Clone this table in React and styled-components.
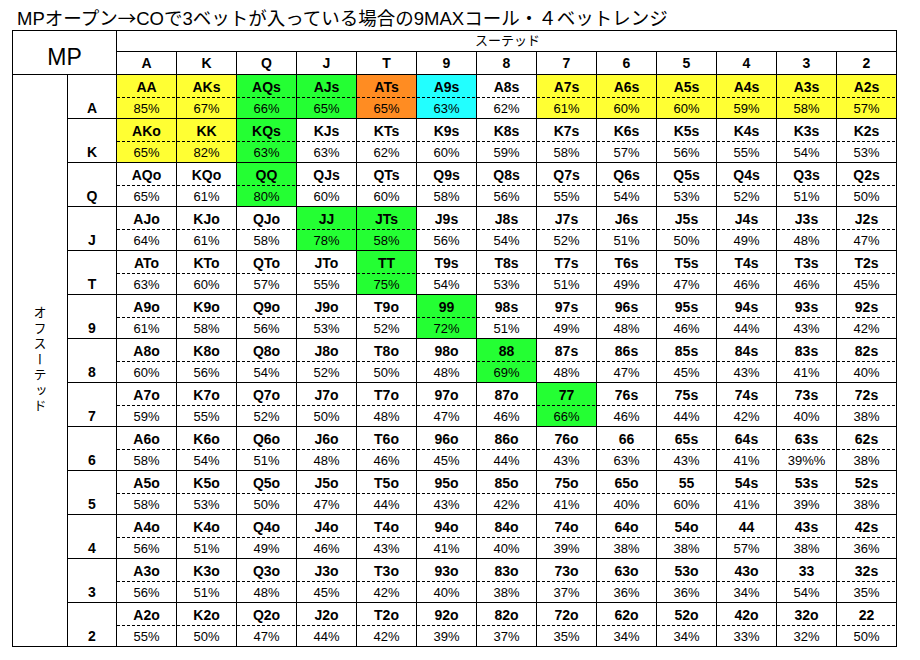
import styled, { createGlobalStyle } from "styled-components";

const RANKS = ["A", "K", "Q", "J", "T", "9", "8", "7", "6", "5", "4", "3", "2"];

const PCTS = [
  ["85", "67", "66", "65", "65", "63", "62", "61", "60", "60", "59", "58", "57"],
  ["65", "82", "63", "63", "62", "60", "59", "58", "57", "56", "55", "54", "53"],
  ["65", "61", "80", "60", "60", "58", "56", "55", "54", "53", "52", "51", "50"],
  ["64", "61", "58", "78", "58", "56", "54", "52", "51", "50", "49", "48", "47"],
  ["63", "60", "57", "55", "75", "54", "53", "51", "49", "47", "46", "46", "45"],
  ["61", "58", "56", "53", "52", "72", "51", "49", "48", "46", "44", "43", "42"],
  ["60", "56", "54", "52", "50", "48", "69", "48", "47", "45", "43", "41", "40"],
  ["59", "55", "52", "50", "48", "47", "46", "66", "46", "44", "42", "40", "38"],
  ["58", "54", "51", "48", "46", "45", "44", "43", "63", "43", "41", "39%", "38"],
  ["58", "53", "50", "47", "44", "43", "42", "41", "40", "60", "41", "39", "38"],
  ["56", "51", "49", "46", "43", "41", "40", "39", "38", "38", "57", "38", "36"],
  ["56", "51", "48", "45", "42", "40", "38", "37", "36", "36", "34", "54", "35"],
  ["55", "50", "47", "44", "42", "39", "37", "35", "34", "34", "33", "32", "50"],
];

const YELLOW = "#ffff33";
const GREEN = "#24ff33";
const ORANGE = "#ff8c22";
const CYAN = "#22ffff";

const COLORS = {
  AA: YELLOW, AKs: YELLOW, AKo: YELLOW, KK: YELLOW,
  A7s: YELLOW, A6s: YELLOW, A5s: YELLOW, A4s: YELLOW, A3s: YELLOW, A2s: YELLOW,
  AQs: GREEN, AJs: GREEN, KQs: GREEN, QQ: GREEN, JJ: GREEN, JTs: GREEN,
  TT: GREEN, "99": GREEN, "88": GREEN, "77": GREEN,
  ATs: ORANGE,
  A9s: CYAN,
};

function handName(i, j) {
  if (i === j) return RANKS[i] + RANKS[j];
  if (i < j) return RANKS[i] + RANKS[j] + "s";
  return RANKS[j] + RANKS[i] + "o";
}

const GlobalStyle = createGlobalStyle`
  body {
    margin: 0;
    background: #fff;
    color: #000;
    font-family: "Liberation Sans", "Noto Sans CJK JP", sans-serif;
  }
`;

const Page = styled.div`
  width: 920px;
  height: 660px;
  overflow: hidden;
`;

const Title = styled.h1`
  margin: 0;
  height: 30px;
  box-sizing: border-box;
  padding: 6px 0 0 17px;
  font-size: 18.5px;
  line-height: 22px;
  font-weight: normal;
  white-space: nowrap;
`;

const Arrow = styled.span`
  font-family: "Noto Sans CJK JP", sans-serif;
`;

const Table = styled.div`
  display: grid;
  grid-template-columns: 55px 49px repeat(13, 60px);
  grid-template-rows: 21px 23px repeat(13, 44px);
  width: max-content;
  margin-left: 12px;
  border-left: 1px solid #000;
  border-top: 1px solid #000;
`;

const Cell = styled.div`
  box-sizing: border-box;
  border-right: 1px solid #000;
  border-bottom: 1px solid #000;
`;

const Corner = styled(Cell)`
  grid-column: span 2;
  grid-row: span 2;
  display: flex;
  align-items: center;
  justify-content: center;
  padding-top: 9px;
  font-size: 23px;
`;

const SuitedHead = styled(Cell)`
  grid-column: span 13;
  padding-left: 358px;
  font-size: 13px;
  line-height: 20px;
`;

const RankHead = styled(Cell)`
  display: flex;
  align-items: center;
  justify-content: center;
  font-size: 14px;
  font-weight: bold;
`;

const OffsuitLabel = styled(Cell)`
  grid-row: span 13;
  display: flex;
  align-items: center;
  justify-content: center;
  span {
    writing-mode: vertical-rl;
    font-family: "Noto Sans CJK JP", sans-serif;
    font-size: 13px;
    letter-spacing: 2.5px;
    line-height: 1;
  }
`;

const RowLabel = styled(Cell)`
  display: flex;
  align-items: center;
  justify-content: center;
  padding-top: 22px;
  font-size: 14px;
  font-weight: bold;
`;

const Hand = styled(Cell)`
  display: grid;
  grid-template-rows: 22px 1px 1fr;
  background: ${({ $bg }) => $bg || "#fff"};
`;

const HandName = styled.div`
  display: flex;
  align-items: center;
  justify-content: center;
  padding-top: 1px;
  font-size: 14px;
  font-weight: bold;
`;

const Dash = styled.div`
  background-image: repeating-linear-gradient(
    to right,
    #000 0 3px,
    transparent 3px 5px
  );
`;

const Pct = styled.div`
  display: flex;
  align-items: center;
  justify-content: center;
  font-size: 13px;
`;

export default function App() {
  return (
    <Page>
      <GlobalStyle />
      <Title>
        MPオープン<Arrow>→</Arrow>COで3ベットが入っている場合の9MAXコール・４ベットレンジ
      </Title>
      <Table>
        <Corner>MP</Corner>
        <SuitedHead>スーテッド</SuitedHead>
        {RANKS.map((r) => (
          <RankHead key={r}>{r}</RankHead>
        ))}
        <OffsuitLabel>
          <span>オフスーテッド</span>
        </OffsuitLabel>
        {RANKS.map((r, i) => [
          <RowLabel key={"l" + r}>{r}</RowLabel>,
          ...RANKS.map((_, j) => {
            const name = handName(i, j);
            return (
              <Hand key={name} $bg={COLORS[name]}>
                <HandName>{name}</HandName>
                <Dash />
                <Pct>{PCTS[i][j]}%</Pct>
              </Hand>
            );
          }),
        ])}
      </Table>
    </Page>
  );
}
